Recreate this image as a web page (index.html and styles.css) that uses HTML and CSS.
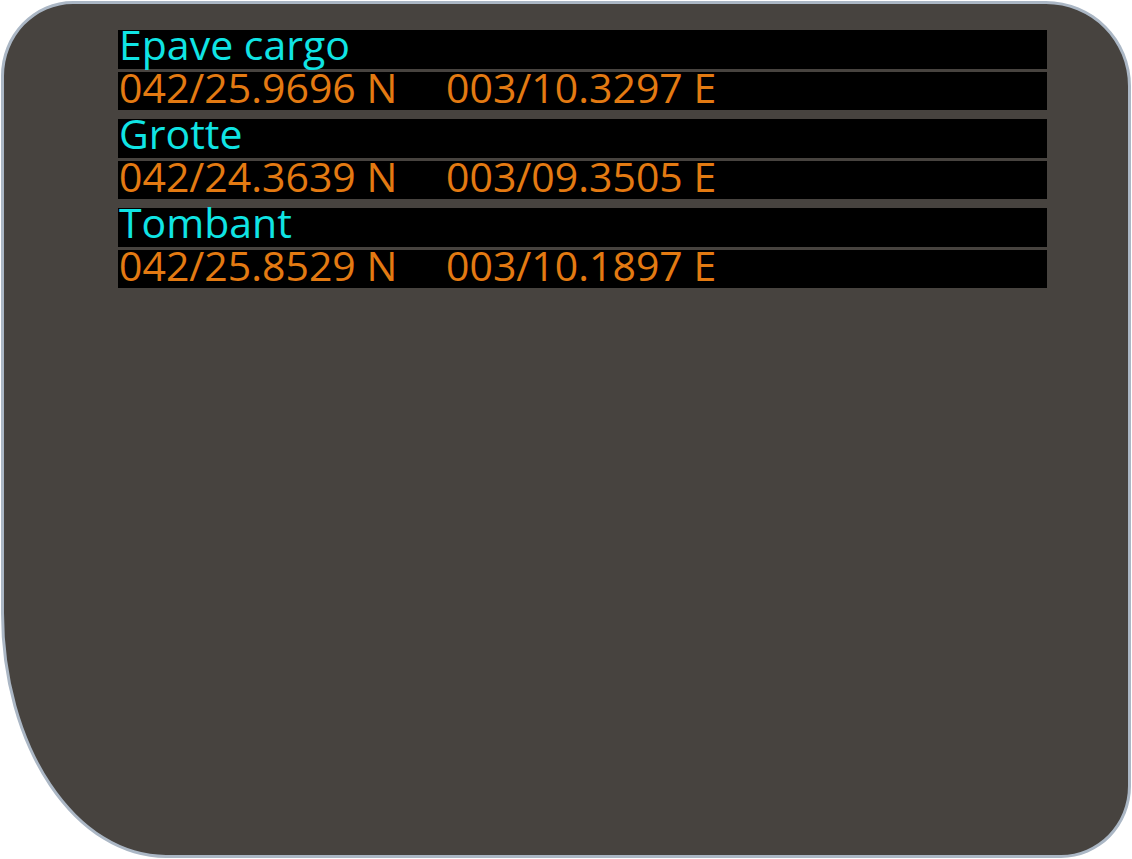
FILE: index.html
```html
<!DOCTYPE html>
<html lang="fr">
<head>
    <meta charset="UTF-8">
    <meta name="viewport" content="width=device-width, initial-scale=1.0">
    <title>Waypoints</title>
    <link rel="stylesheet" href="styles.css">
</head>
<body>
    <div class="panel">
        <div class="waypoints">
            <div class="waypoint">
                <div class="wp-name">Epave cargo</div>
                <div class="wp-coords"><span class="lat">042/25.9696 N</span><span class="lon">003/10.3297 E</span></div>
            </div>
            <div class="waypoint">
                <div class="wp-name">Grotte</div>
                <div class="wp-coords"><span class="lat">042/24.3639 N</span><span class="lon">003/09.3505 E</span></div>
            </div>
            <div class="waypoint">
                <div class="wp-name">Tombant</div>
                <div class="wp-coords"><span class="lat">042/25.8529 N</span><span class="lon">003/10.1897 E</span></div>
            </div>
        </div>
    </div>
</body>
</html>
```

FILE: styles.css
```css
body {
    margin: 0;
    background: #ffffff;
    font-family: "Open Sans", "DejaVu Sans", sans-serif;
}
.panel {
    box-sizing: border-box;
    height: 857px;
    margin: 1px;
    background: #47433f;
    border: 3px solid #abb7c5;
    border-radius: 72px 85px 70px 165px / 75px 85px 72px 245px;
    padding: 26px 0 0 114px;
}
.waypoints {
    display: flex;
    flex-direction: column;
    gap: 9px;
    width: 929px;
}
.waypoint {
    display: flex;
    flex-direction: column;
    gap: 3px;
}
.wp-name, .wp-coords {
    background: #000000;
    font-size: 41px;
    white-space: nowrap;
    padding-left: 1px;
}
.wp-name {
    height: 39px;
    line-height: 29px;
    color: #10e4e4;
}
.wp-coords {
    display: flex;
    height: 38px;
    line-height: 31px;
    color: #e37a12;
}
.lat {
    width: 327px;
}
```
